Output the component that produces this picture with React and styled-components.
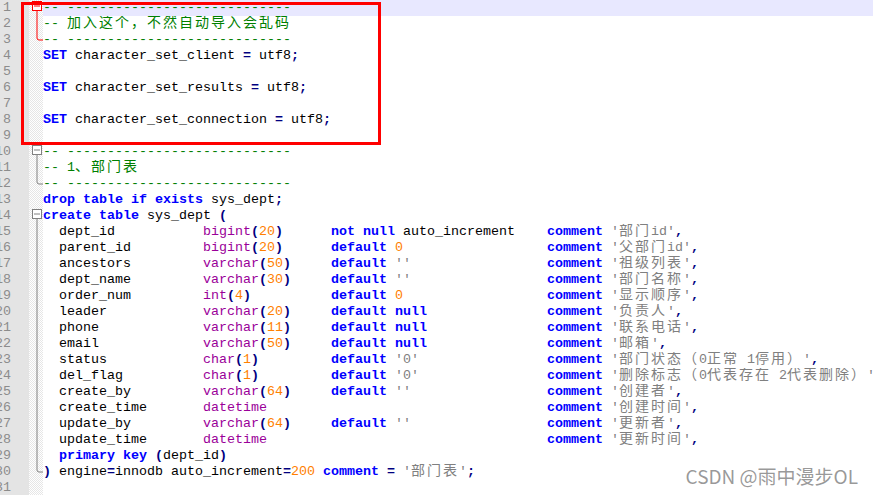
import styled, { createGlobalStyle } from 'styled-components';

const GlobalStyle = createGlobalStyle`
    html, body {
        margin: 0;
        padding: 0;
        background: #ffffff;
    }
`;

const Screen = styled.div`
    position: relative;
    width: 873px;
    height: 495px;
    overflow: hidden;
    background: #ffffff;
    font-family: 'Liberation Mono', 'Courier New', monospace;
    font-size: 13.333px;
`;

const Row = styled.div`
    display: flex;
    height: 16px;
    line-height: 16px;
`;

const LineNo = styled.div`
    flex: 0 0 29px;
    box-sizing: border-box;
    display: flex;
    justify-content: flex-end;
    padding-right: 18px;
    overflow: hidden;
    background: #e4e4e4;
    color: #8c8c8c;
`;

const FoldCell = styled.div`
    flex: 0 0 14px;
    height: 16px;
    background: repeating-conic-gradient(#e6e6e6 0 25%, #ffffff 0 50%) 0 0 / 2px 2px;
    svg {
        display: block;
    }
`;

const Code = styled.div`
    flex: 1;
    white-space: pre;
    overflow: hidden;
    color: #000000;
    background: ${(p) => (p.$current ? '#e8e8ff' : 'transparent')};
`;

const tokenColors = {
    p: '#000000',
    k: '#0000ff',
    t: '#9a0099',
    n: '#ff8000',
    s: '#808080',
    o: '#000080',
    c: '#008000',
};

const Tok = styled.span`
    color: ${(p) => tokenColors[p.$kind]};
    font-weight: ${(p) => (p.$kind === 'k' || p.$kind === 'o' ? 700 : 400)};
`;

const Cjk = styled.span`
    font-family: 'Noto Sans CJK SC', sans-serif;
    font-size: 14px;
    line-height: 10px;
    letter-spacing: 2px;
    font-weight: 400;
`;

const Highlight = styled.div`
    position: absolute;
    left: 21px;
    top: 2px;
    width: 360px;
    height: 143px;
    box-sizing: border-box;
    border: 3px solid #ff0000;
    pointer-events: none;
`;

const Watermark = styled.div`
    position: absolute;
    right: 15px;
    bottom: 8px;
    font-family: 'Noto Sans CJK SC', sans-serif;
    font-size: 19px;
    line-height: 22px;
    color: rgba(120, 120, 120, 0.75);
    white-space: nowrap;
`;

// split text so wide chars get their own run
function splitWide(text) {
    const out = [];
    let buf = '';
    let wide = false;
    for (const ch of text) {
        const w = ch.codePointAt(0) > 0x2e7f;
        if (buf && w !== wide) {
            out.push([wide, buf]);
            buf = '';
        }
        wide = w;
        buf += ch;
    }
    if (buf) out.push([wide, buf]);
    return out;
}

function Token({ kind, text }) {
    return (
        <Tok $kind={kind}>
            {splitWide(text).map(([wide, part], i) =>
                wide ? <Cjk key={i}>{part}</Cjk> : part
            )}
        </Tok>
    );
}

function FoldMark({ type, red }) {
    const c = red ? '#ff0000' : '#808080';
    if (!type) return null;
    return (
        <svg width="14" height="16" viewBox="0 0 14 16">
            {type === 'open' && (
                <>
                    <rect x="3.5" y="1.5" width="9" height="9" fill="#fff" stroke={c} />
                    <line x1="5" y1="6" x2="11" y2="6" stroke={c} />
                    <line x1="8" y1="10.5" x2="8" y2="16" stroke={c} />
                </>
            )}
            {type === 'mid' && <line x1="8" y1="0" x2="8" y2="16" stroke={c} />}
            {type === 'end' && (
                <path d="M8 0 V6 Q8 8 10 8 H14" fill="none" stroke={c} />
            )}
        </svg>
    );
}

const len = (toks) => toks.reduce((a, t) => a + t[1].length, 0);
const pad = (toks, col) => {
    const n = col - len(toks);
    return n > 0 ? [...toks, ['p', ' '.repeat(n)]] : toks;
};

const dash = [['c', '-- ----------------------------']];

const attrs = {
    nn: [['k', 'not null'], ['p', ' auto_increment']],
    d0: [['k', 'default'], ['p', ' '], ['n', '0']],
    de: [['k', 'default'], ['p', ' '], ['s', "''"]],
    dn: [['k', 'default null']],
    dz: [['k', 'default'], ['p', ' '], ['s', "'0'"]],
    no: [],
};

const columns = [
    ['dept_id', 'bigint', '20', 'nn', '部门id'],
    ['parent_id', 'bigint', '20', 'd0', '父部门id'],
    ['ancestors', 'varchar', '50', 'de', '祖级列表'],
    ['dept_name', 'varchar', '30', 'de', '部门名称'],
    ['order_num', 'int', '4', 'd0', '显示顺序'],
    ['leader', 'varchar', '20', 'dn', '负责人'],
    ['phone', 'varchar', '11', 'dn', '联系电话'],
    ['email', 'varchar', '50', 'dn', '邮箱'],
    ['status', 'char', '1', 'dz', '部门状态（0正常 1停用）'],
    ['del_flag', 'char', '1', 'dz', '删除标志（0代表存在 2代表删除）'],
    ['create_by', 'varchar', '64', 'de', '创建者'],
    ['create_time', 'datetime', null, 'no', '创建时间'],
    ['update_by', 'varchar', '64', 'de', '更新者'],
    ['update_time', 'datetime', null, 'no', '更新时间'],
];

function columnLine([name, type, size, attr, note]) {
    let toks = pad([['p', '  ' + name]], 20);
    toks = [...toks, ['t', type]];
    if (size) toks = [...toks, ['o', '('], ['n', size], ['o', ')']];
    if (attrs[attr].length) toks = [...pad(toks, 36), ...attrs[attr]];
    toks = pad(toks, 63);
    return [...toks, ['k', 'comment'], ['p', ' '], ['s', `'${note}'`], ['o', ',']];
}

const lines = [
    { toks: dash, fold: 'open', red: true },
    { toks: [['c', '-- 加入这个，不然自动导入会乱码']], fold: 'mid', red: true },
    { toks: dash, fold: 'end', red: true },
    { toks: [['k', 'SET'], ['p', ' character_set_client '], ['o', '='], ['p', ' utf8'], ['o', ';']] },
    { toks: [] },
    { toks: [['k', 'SET'], ['p', ' character_set_results '], ['o', '='], ['p', ' utf8'], ['o', ';']] },
    { toks: [] },
    { toks: [['k', 'SET'], ['p', ' character_set_connection '], ['o', '='], ['p', ' utf8'], ['o', ';']] },
    { toks: [] },
    { toks: dash, fold: 'open' },
    { toks: [['c', '-- 1、部门表']], fold: 'mid' },
    { toks: dash, fold: 'end' },
    { toks: [['k', 'drop table if exists'], ['p', ' sys_dept'], ['o', ';']] },
    { toks: [['k', 'create table'], ['p', ' sys_dept '], ['o', '(']], fold: 'open' },
    ...columns.map((c) => ({ toks: columnLine(c), fold: 'mid' })),
    {
        toks: [['p', '  '], ['k', 'primary key'], ['p', ' '], ['o', '('], ['p', 'dept_id'], ['o', ')']],
        fold: 'mid',
    },
    {
        toks: [
            ['o', ')'], ['p', ' engine'], ['o', '='], ['p', 'innodb auto_increment'], ['o', '='],
            ['n', '200'], ['p', ' '], ['k', 'comment'], ['p', ' '], ['o', '='], ['p', ' '],
            ['s', "'部门表'"], ['o', ';'],
        ],
        fold: 'end',
    },
    { toks: [] },
];

export default function App() {
    return (
        <>
            <GlobalStyle />
            <Screen>
                {lines.map((line, i) => (
                    <Row key={i}>
                        <LineNo>{i + 1}</LineNo>
                        <FoldCell>
                            <FoldMark type={line.fold} red={line.red} />
                        </FoldCell>
                        <Code $current={i === 0}>
                            {line.toks.map(([kind, text], j) => (
                                <Token key={j} kind={kind} text={text} />
                            ))}
                        </Code>
                    </Row>
                ))}
                <Highlight />
                <Watermark>CSDN @雨中漫步OL</Watermark>
            </Screen>
        </>
    );
}
